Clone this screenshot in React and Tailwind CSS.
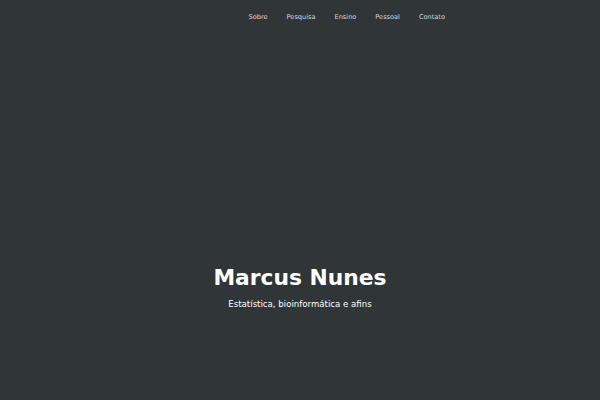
export default function App() {
  return (
    <div
      className="w-[600px] h-[400px] bg-[#303538] flex flex-col text-white"
      style={{ fontFamily: '"DejaVu Sans", sans-serif' }}
    >
      {/* Nav */}
      <nav className="flex justify-end pr-[155px] h-[32px] pt-[4px] items-center">
        <ul className="flex gap-[19px] text-[6.6px] text-[#d8d8d8]">
          <li>Sobre</li>
          <li>Pesquisa</li>
          <li>Ensino</li>
          <li>Pessoal</li>
          <li>Contato</li>
        </ul>
      </nav>

      {/* Header */}
      <header className="flex-1 flex flex-col items-center pt-[235px]">
        <h1 className="text-[21.8px] font-bold leading-none">Marcus Nunes</h1>
        <p className="mt-[11px] text-[8.6px] leading-none">Estatística, bioinformática e afins</p>
      </header>
    </div>
  );
}
